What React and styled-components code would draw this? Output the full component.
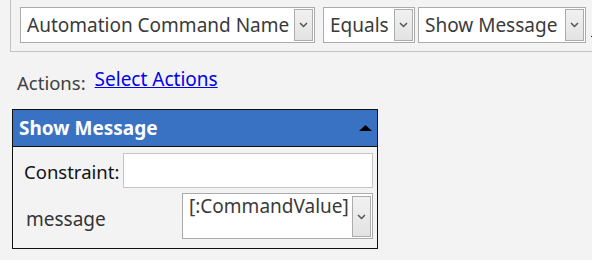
import React from "react";
import styled, { createGlobalStyle } from "styled-components";

const GlobalStyle = createGlobalStyle`
  html, body {
    margin: 0;
    padding: 0;
    background: #f3f3f3;
    overflow: hidden;
    font-family: "Noto Sans", "Open Sans", sans-serif;
  }
`;

const Page = styled.div`
  width: 592px;
  height: 260px;
  padding-left: 10px;
  box-sizing: border-box;
  overflow: hidden;
`;

const FilterFrame = styled.div`
  display: flex;
  align-items: center;
  white-space: nowrap;
  border-left: 1px solid #c2c2c2;
  border-bottom: 1px solid #c2c2c2;
  padding: 7px 0 8px 9px;
  width: 700px;
`;

const SelectBox = styled.div`
  display: flex;
  flex: none;
  box-sizing: border-box;
  width: ${(p) => p.$width}px;
  height: ${(p) => p.$height || 36}px;
  margin-left: ${(p) => p.$ml || 0}px;
  padding: ${(p) => (p.$tall ? "2px 1px 1px 0" : "1px 1px 1px 0")};
  background: #fff;
  border: 1px solid #ababab;
`;

const SelectText = styled.span`
  flex: 1;
  min-width: 0;
  padding-left: 6px;
  font-size: 19px;
  color: #3a3a3a;
  line-height: ${(p) => (p.$top ? "20px" : "32px")};
  white-space: nowrap;
`;

const DropButton = styled.span`
  flex: none;
  width: 19px;
  box-sizing: border-box;
  display: flex;
  align-items: center;
  justify-content: center;
  border: 1px solid #acacac;
  background: linear-gradient(#f1f1f1, #e3e3e3);
`;

const Chevron = () => (
  <svg width="9" height="6" viewBox="0 0 9 6">
    <path d="M1 1 L4.5 4.5 L8 1" fill="none" stroke="#555" strokeWidth="1.5" />
  </svg>
);

const Select = ({ value, width, ml, height, tall }) => (
  <SelectBox $width={width} $ml={ml} $height={height} $tall={tall}>
    <SelectText $top={tall}>{value}</SelectText>
    <DropButton>
      <Chevron />
    </DropButton>
  </SelectBox>
);

const EdgeLink = styled.a`
  margin-left: 5px;
  font-size: 19px;
  color: #0000ee;
  text-decoration: underline;
  line-height: 26px;
  margin-top: 6px;
`;

const ActionsRow = styled.div`
  display: flex;
  align-items: flex-start;
  margin: 14px 0 0 7px;
`;

const ActionsLabel = styled.span`
  font-size: 18.5px;
  line-height: 26px;
  color: #404040;
  margin-top: 4px;
`;

const ActionsLink = styled.a`
  margin-left: 9px;
  font-size: 19px;
  line-height: 26px;
  color: #0000ee;
  text-decoration: underline;
  cursor: pointer;
`;

const Panel = styled.div`
  margin: 13px 0 0 2px;
  width: 366px;
  box-sizing: border-box;
  border: 1px solid #111;
  background: #f3f3f3;
`;

const PanelHeader = styled.div`
  display: flex;
  align-items: center;
  justify-content: space-between;
  height: 36px;
  padding: 0 5px 0 6px;
  background: #3a72c3;
  border-bottom: 1px solid #111;
`;

const PanelTitle = styled.span`
  font-size: 19px;
  font-weight: 700;
  color: #fff;
  line-height: 36px;
`;

const CollapseArrow = () => (
  <svg width="13" height="6" viewBox="0 0 13 6">
    <polygon points="0,6 13,6 6.5,0" fill="#000" />
  </svg>
);

const PanelBody = styled.div`
  padding: 6px 4px 9px 11px;
  display: flex;
  flex-direction: column;
  gap: 5px;
`;

const FieldRow = styled.div`
  display: flex;
  align-items: center;
`;

const FieldLabel = styled.span`
  font-size: ${(p) => p.$size || 19}px;
  line-height: 26px;
  color: ${(p) => p.$color || "#111"};
  margin-left: ${(p) => p.$ml || 0}px;
  margin-top: ${(p) => p.$mt || 0}px;
`;

const TextInput = styled.div`
  flex: 1;
  margin-left: 4px;
  height: 35px;
  box-sizing: border-box;
  background: #fff;
  border: 1px solid #c6c6c6;
`;

const Spacer = styled.div`
  flex: 1;
`;

export default function App() {
  return (
    <>
      <GlobalStyle />
      <Page>
        <FilterFrame>
          <Select value="Automation Command Name" width={295} />
          <Select value="Equals" width={92} ml={8} />
          <Select value="Show Message" width={168} ml={3} />
          <EdgeLink>{"\u00a0\u00a0Edit"}</EdgeLink>
        </FilterFrame>
        <ActionsRow>
          <ActionsLabel>Actions:</ActionsLabel>
          <ActionsLink>Select Actions</ActionsLink>
        </ActionsRow>
        <Panel>
          <PanelHeader>
            <PanelTitle>Show Message</PanelTitle>
            <CollapseArrow />
          </PanelHeader>
          <PanelBody>
            <FieldRow>
              <FieldLabel $mt={3} $size={18.5}>Constraint:</FieldLabel>
              <TextInput />
            </FieldRow>
            <FieldRow>
              <FieldLabel $ml={2} $mt={6} $color="#333">message</FieldLabel>
              <Spacer />
              <Select value="[:CommandValue]" width={191} height={46} tall />
            </FieldRow>
          </PanelBody>
        </Panel>
      </Page>
    </>
  );
}
